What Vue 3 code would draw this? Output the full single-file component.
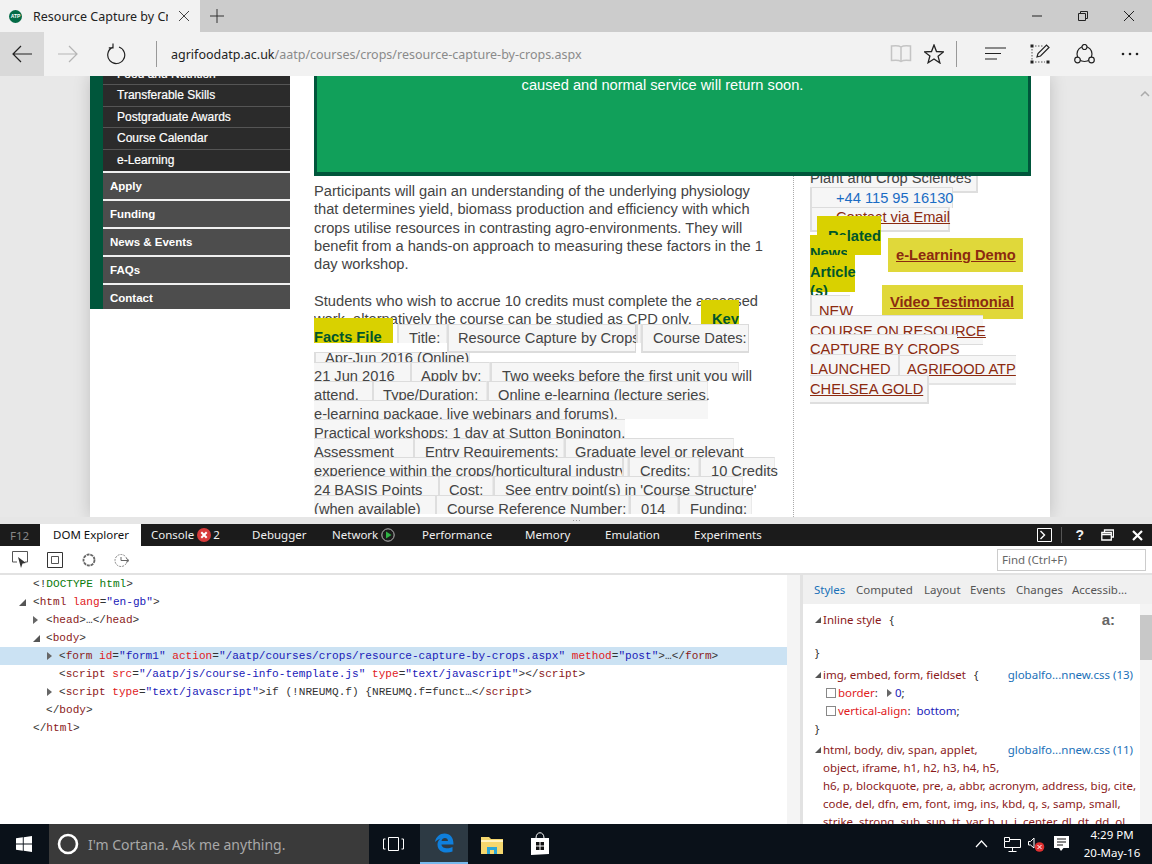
<template>
  <div class="screen">
    <!-- browser tab strip -->
    <div class="tabstrip">
      <div class="tab">
        <span class="favicon">ATP</span>
        <span class="tab-title">Resource Capture by Cr</span>
        <svg class="tab-x" width="12" height="12" viewBox="0 0 12 12"><path d="M1 1l10 10M11 1L1 11" stroke="#444" fill="none"/></svg>
      </div>
      <svg class="tab-plus" width="14" height="14" viewBox="0 0 14 14"><path d="M7 0v14M0 7h14" stroke="#333" fill="none"/></svg>
      <div class="win-btns">
        <svg width="12" height="12" viewBox="0 0 12 12"><path d="M1 6h10" stroke="#222" fill="none"/></svg>
        <svg width="12" height="12" viewBox="0 0 12 12"><path d="M3.5 3V1.500h7v7H8.500M1.500 3.500h7v7h-7z" stroke="#222" fill="none"/></svg>
        <svg width="12" height="12" viewBox="0 0 12 12"><path d="M1 1l10 10M11 1L1 11" stroke="#222" fill="none"/></svg>
      </div>
    </div>

    <!-- address bar -->
    <div class="toolbar">
      <div class="nav-btn back">
        <svg width="20" height="18" viewBox="0 0 20 18"><path d="M9 1L1 9l8 8M1 9h19" stroke="#222" fill="none" stroke-width="1.200"/></svg>
      </div>
      <div class="nav-btn">
        <svg width="20" height="18" viewBox="0 0 20 18"><path d="M11 1l8 8-8 8M19 9H0" stroke="#b5b5b5" fill="none" stroke-width="1.200"/></svg>
      </div>
      <div class="nav-btn refresh">
        <svg width="20" height="22" viewBox="0 0 20 22"><path d="M6.500 4.400a8.500 8.500 0 1 0 6.500-.4M7 .5v4.300H2.800" stroke="#222" fill="none" stroke-width="1.200"/></svg>
      </div>
      <div class="tool-sep"></div>
      <div class="url"><span class="url-host">agrifoodatp.ac.uk</span>/aatp/courses/crops/resource-capture-by-crops.aspx</div>
      <div class="tool-right">
        <svg class="ti-book" width="22" height="20" viewBox="0 0 22 20"><path d="M11 3C9 1.500 5 1.500 1.500 2v14.500c3.500-.5 7.500-.5 9.500 1 2-1.500 6-1.500 9.500-1V2C17 1.500 13 1.500 11 3zM11 3v14.500" stroke="#c4c4c4" stroke-width="1.500" fill="none"/></svg>
        <svg class="ti-star" width="20" height="20" viewBox="0 0 20 20"><path d="M10 1l2.500 6.500 7 .4-5.400 4.400 1.800 6.700L10 15l-5.900 3.700 1.800-6.700L.5 7.900l7-.4z" stroke="#222" stroke-width="1.300" fill="none"/></svg>
        <div class="tool-sep right"></div>
        <svg class="ti-hub" width="21" height="16" viewBox="0 0 21 16"><path d="M0 2h21M0 7.500h16M0 13h12" stroke="#222" stroke-width="1.200" fill="none"/></svg>
        <svg class="ti-note" width="20" height="20" viewBox="0 0 20 20"><path d="M2 5v11M5 18h10M5 2h8" stroke="#555" stroke-dasharray="1.500 1.500" fill="none"/><path d="M.5.500h3v3h-3zM.5 16.500h3v3h-3zM16.500 16.500h3v3h-3z" fill="#222"/><path d="M7 13l1-3.500L16.500 1 19 3.500 10.500 12z" stroke="#222" stroke-width="1.200" fill="none"/></svg>
        <svg class="ti-share" width="21" height="20" viewBox="0 0 21 20"><circle cx="10.500" cy="10" r="7.500" stroke="#222" stroke-width="1.200" fill="none"/><circle cx="10.500" cy="3" r="2.500" stroke="#222" stroke-width="1.200" fill="#f2f2f2"/><circle cx="3.500" cy="16" r="2.800" stroke="#222" stroke-width="1.200" fill="#f2f2f2"/><circle cx="17.500" cy="16" r="2.800" stroke="#222" stroke-width="1.200" fill="#f2f2f2"/></svg>
        <svg class="ti-dots" width="18" height="4" viewBox="0 0 18 4"><circle cx="2" cy="2" r="1.300" fill="#222"/><circle cx="9" cy="2" r="1.300" fill="#222"/><circle cx="16" cy="2" r="1.300" fill="#222"/></svg>
      </div>
    </div>

    <!-- web page -->
    <div class="viewport">
      <div class="page">
        <div class="sidebar">
          <ul class="subnav">
            <li v-for="item in subNav" :key="item">{{ item }}</li>
          </ul>
          <ul class="mainnav">
            <li v-for="item in mainNav" :key="item">{{ item }}</li>
          </ul>
        </div>
        <div class="content">
          <div class="notice">caused and normal service will return soon.</div>
          <div class="columns">
            <div class="main">
              <p class="para">Participants will gain an understanding of the underlying physiology that determines yield, biomass production and efficiency with which crops utilise resources in contrasting agro-environments. They will benefit from a hands-on approach to measuring these factors in the 1 day workshop.</p>
              <p class="para para-cut">Students who wish to accrue 10 credits must complete the assessed work, alternatively the course can be studied as CPD only.</p>
              <div class="key">Key</div>
              <div v-for="(row, r) in factRows" :key="r" class="fact-row" :class="row.cls">
                <div
                  v-for="cell in row.cells"
                  :key="cell.t"
                  class="cell"
                  :class="cell.cls"
                  :style="{ width: cell.w + 'px', paddingLeft: (cell.p || 0) + 'px', marginLeft: (cell.m || 0) + 'px' }"
                >{{ cell.t }}</div>
              </div>
            </div>
            <div class="aside">
              <div class="a-cell a-plant">Plant and Crop Sciences</div>
              <div class="a-cell a-phone"><a>+44 115 95 16130</a></div>
              <div class="a-cell a-mail"><a>Contact via Email</a></div>
              <div class="y-related">Related</div>
              <div class="y-news">News</div>
              <div class="y-article">Article<br>(s)</div>
              <a class="promo promo-demo">e-Learning Demo</a>
              <a class="promo promo-video">Video Testimonial</a>
              <div class="a-cell a-new"><a>NEW</a></div>
              <div class="a-cell a-course"><a>COURSE ON RESOURCE</a></div>
              <div class="a-cell a-capture"><a>CAPTURE BY CROPS</a></div>
              <div class="a-split">
                <div class="a-cell a-launched"><a>LAUNCHED</a></div>
                <div class="a-cell a-agrifood"><a>AGRIFOOD ATP</a></div>
              </div>
              <div class="a-cell a-chelsea"><a>CHELSEA GOLD</a></div>
            </div>
          </div>
        </div>
      </div>
      <div class="page-scroll">
        <svg width="10" height="6" viewBox="0 0 10 6"><path d="M1 5l4-4 4 4" stroke="#aaa" stroke-width="1.500" fill="none"/></svg>
      </div>
    </div>

    <div class="splitter"><span></span><span></span><span></span></div>

    <!-- F12 tools -->
    <div class="devbar">
      <div class="dev-f12">F12</div>
      <div
        v-for="tab in devTabs"
        :key="tab.name"
        class="dev-tab"
        :class="{ active: tab.active }"
        :style="{ width: tab.w + 'px' }"
      >
        {{ tab.name }}
        <span v-if="tab.name === 'Console'" class="err-badge"><svg width="14" height="14" viewBox="0 0 14 14"><circle cx="7" cy="7" r="7" fill="#d83b3b"/><path d="M4.300 4.300l5.400 5.400M9.700 4.300l-5.400 5.400" stroke="#fff" stroke-width="2"/></svg>2</span>
        <svg v-if="tab.name === 'Network'" class="net-icon" width="14" height="14" viewBox="0 0 14 14"><circle cx="7" cy="7" r="6.200" stroke="#bbb" fill="none"/><path d="M5 3.500L10.500 7 5 10.500z" fill="#2fb344"/></svg>
      </div>
      <div class="dev-right">
        <svg width="15" height="14" viewBox="0 0 15 14"><path d="M.5.500h14v13H.5z" stroke="#fff" fill="none"/><path d="M3.500 3l4 4-4 4" stroke="#fff" stroke-width="1.400" fill="none"/></svg>
        <div class="dev-sep"></div>
        <span class="dev-help">?</span>
        <svg class="dev-win" width="13" height="12" viewBox="0 0 13 12"><path d="M3.500 3V1h9v7h-2M.8 3.500h9.500V11H.8zM.8 5.500h9.500" stroke="#fff" fill="none" stroke-width="1.300"/></svg>
        <svg class="dev-x" width="11" height="11" viewBox="0 0 11 11"><path d="M1 1l9 9M10 1l-9 9" stroke="#fff" stroke-width="2.200" fill="none"/></svg>
      </div>
    </div>
    <div class="dev-tools">
      <svg class="dt-pick" width="17" height="18" viewBox="0 0 17 18"><path d="M5 11H.5V.5h15V11H13" stroke="#555" fill="none"/><path d="M6 6l8 6-3.500.5L9 17z" fill="#333"/></svg>
      <svg class="dt-box" width="16" height="16" viewBox="0 0 16 16"><path d="M.5.500h15v15H.5z" stroke="#333" fill="none"/><path d="M4.500 4.500h7v7h-7z" stroke="#555" fill="none"/></svg>
      <svg class="dt-ring" width="14" height="14" viewBox="0 0 14 14"><circle cx="7" cy="7" r="5.500" stroke="#666" stroke-width="1.800" stroke-dasharray="3 .8" fill="none"/></svg>
      <svg class="dt-clock" width="16" height="16" viewBox="0 0 16 16"><circle cx="7" cy="8.500" r="6" stroke="#888" stroke-dasharray="2 1" fill="none"/><path d="M7 5v3.500h7M12.500 6.500L15 8.500l-2.500 2" stroke="#666" fill="none"/></svg>
      <div class="find">Find (Ctrl+F)</div>
    </div>

    <div class="dev-panes">
      <div class="dom-pane">
        <div class="dom-tree">
          <div v-for="(line, i) in domLines" :key="i" class="dom-line" :class="{ sel: line.sel }" :style="{ paddingLeft: line.x + 'px' }">
            <i v-if="line.arrow" class="arrow" :class="line.arrow"></i>
            <span v-for="(part, k) in line.parts" :key="k" :class="part[0]">{{ part[1] }}</span>
          </div>
        </div>
        <div class="dom-scroll">
          <div class="dom-scroll-arrows">
            <svg width="6" height="10" viewBox="0 0 6 10"><path d="M5 0v10L0 5z" fill="#555"/></svg>
            <svg width="6" height="10" viewBox="0 0 6 10"><path d="M1 0v10l5-5z" fill="#555"/></svg>
          </div>
        </div>
      </div>
      <div class="side-pane">
        <div class="side-tabs">
          <span v-for="t in sideTabs" :key="t.name" :class="{ on: t.on }" :style="{ width: t.w + 'px' }">{{ t.name }}</span>
        </div>
        <div class="styles-body">
          <div class="styles">
            <div class="rule-head r1"><i class="arrow open small"></i><span class="sel-name">Inline style</span><span class="brace">{</span><b class="pseudo">a:</b></div>
            <div class="close c1">}</div>
            <div class="rule-head r2"><i class="arrow open small"></i><span class="sel-name">img, embed, form, fieldset</span><span class="brace">{</span><a class="src">globalfo...nnew.css (13)</a></div>
            <div class="decl"><i class="check"></i><span class="prop">border</span><span class="colon">:</span><i class="arrow shut tiny"></i><span class="val">0</span><span class="colon">;</span></div>
            <div class="decl"><i class="check"></i><span class="prop">vertical-align</span><span class="colon">:</span><span class="val gap">bottom</span><span class="colon">;</span></div>
            <div class="close c2">}</div>
            <div class="rule-head r3"><i class="arrow open small"></i><span class="sel-name">html, body, div, span, applet,</span><a class="src">globalfo...nnew.css (11)</a></div>
            <div class="sel-more">object, iframe, h1, h2, h3, h4, h5,</div>
            <div class="sel-more">h6, p, blockquote, pre, a, abbr, acronym, address, big, cite,</div>
            <div class="sel-more">code, del, dfn, em, font, img, ins, kbd, q, s, samp, small,</div>
            <div class="sel-more">strike, strong, sub, sup, tt, var, b, u, i, center, dl, dt, dd, ol,</div>
            <div class="sel-more">ul, li, fieldset, form, label, legend, caption, tbody, tfoot, thead</div>
          </div>
          <div class="styles-scroll"><div class="thumb"></div></div>
        </div>
      </div>
    </div>

    <!-- windows taskbar -->
    <div class="taskbar">
      <div class="start">
        <svg width="16" height="16" viewBox="0 0 16 16"><path d="M0 2.300l6.800-1v6.300H0zM7.700 1.200L16 0v7.600H7.700zM0 8.500h6.800v6.200l-6.800-1zM7.700 8.500H16V16l-8.300-1.200z" fill="#fff"/></svg>
      </div>
      <div class="cortana">
        <svg width="22" height="22" viewBox="0 0 22 22"><circle cx="11" cy="11" r="9" stroke="#fff" stroke-width="2.600" fill="none"/></svg>
        <span>I'm Cortana. Ask me anything.</span>
      </div>
      <div class="task-item taskview">
        <svg width="21" height="14" viewBox="0 0 21 14"><path d="M5.500.5h10v13h-10zM2.500 2H.5v10h2M18.500 2h2v10h-2" stroke="#fff" fill="none"/></svg>
      </div>
      <div class="task-item edge">
        <svg width="20" height="20" viewBox="0 0 20 20"><path d="M1 9C2 3.500 6 .5 10.500.5 16 .5 19.500 4 19.500 11.500H7.500c.3 4 6.500 5 11 2.500v4.500c-6 2.500-15 1-15-7 0-2.500 1-4.500 3-6C4.500 6.500 2.500 7.500 1 9zM7.500 8h6.500c0-4-6-4-6.500 0z" fill="#0f7fdc"/></svg>
      </div>
      <div class="task-item">
        <svg width="22" height="19" viewBox="0 0 22 19"><path d="M0 2h8l2 2h12v15H0z" fill="#f5d76e"/><path d="M0 5h22v2H0z" fill="#fff3c0"/><path d="M6 19v-7h10v7h-3v-4H9v4z" fill="#2aa7d8"/></svg>
      </div>
      <div class="task-item">
        <svg width="20" height="24" viewBox="0 0 20 24"><path d="M1 6h18v16l-18 1z" fill="#fff"/><path d="M6 6c0-7 8-7 8 0" stroke="#fff" fill="none"/><path d="M6 10h3.500v3.500H6zM10.500 10H14v3.500h-3.500zM6 14.500h3.500V18H6zM10.500 14.500H14V18h-3.500z" fill="#111"/></svg>
      </div>
      <div class="tray">
        <svg class="tr-up" width="13" height="8" viewBox="0 0 13 8"><path d="M1 7l5.500-6L12 7" stroke="#fff" stroke-width="1.200" fill="none"/></svg>
        <svg class="tr-net" width="17" height="15" viewBox="0 0 17 15"><path d="M.5.500h5v4h-5zM5.500 2.500h11v8h-16V4.500M8.500 10.500v4M4.500 14.500h8" stroke="#fff" fill="none"/></svg>
        <svg class="tr-vol" width="17" height="15" viewBox="0 0 17 15"><path d="M.5 4.500h2l3.500-3.500v10L2.500 8h-2z" stroke="#fff" fill="none"/><circle cx="11.500" cy="10" r="4.800" fill="#e03131"/><path d="M9.500 8l4 4M13.500 8l-4 4" stroke="#fff"/></svg>
        <svg class="tr-msg" width="15" height="16" viewBox="0 0 15 16"><path d="M0 0h15v12H9.500l-2.500 3-2-3H0z" fill="#fff"/><path d="M3 3h9M3 6h9M3 9h6" stroke="#111"/></svg>
        <div class="clock"><span>4:29 PM</span><span>20-May-16</span></div>
      </div>
    </div>
  </div>
</template>

<script setup>
const subNav = ['Food and Nutrition', 'Transferable Skills', 'Postgraduate Awards', 'Course Calendar', 'e-Learning']
const mainNav = ['Apply', 'Funding', 'News & Events', 'FAQs', 'Contact']

// the page's broken table: every box is clipped by the row below it
const factRows = [
  { cls: 'first', cells: [
    { t: 'Facts File', w: 79, cls: 'facts' },
    { t: 'Title:', w: 50, p: 10, m: 4, cls: 'box short' },
    { t: 'Resource Capture by Crops', w: 189, p: 9, cls: 'box tall' },
    { t: '', w: 5, cls: 'box short' },
    { t: 'Course Dates:', w: 108, p: 10, cls: 'box tall' }
  ] },
  { cls: 'second', cells: [
    { t: 'Apr-Jun 2016 (Online)', w: 156, p: 9, cls: 'box squat' }
  ] },
  { cells: [
    { t: '21 Jun 2016', w: 96 },
    { t: 'Apply by:', w: 80, p: 9, cls: 'box' },
    { t: 'Two weeks before the first unit you will', w: 249, p: 10, cls: 'box' }
  ] },
  { cells: [
    { t: 'attend.', w: 58 },
    { t: 'Type/Duration:', w: 115, p: 9, cls: 'box' },
    { t: 'Online e-learning (lecture series,', w: 221, p: 9, cls: 'box' }
  ] },
  { cells: [
    { t: 'e-learning package, live webinars and forums).', w: 394 }
  ] },
  { cells: [
    { t: 'Practical workshops: 1 day at Sutton Bonington.', w: 311 }
  ] },
  { cells: [
    { t: 'Assessment', w: 99 },
    { t: 'Entry Requirements:', w: 151, p: 10, cls: 'box' },
    { t: 'Graduate level or relevant', w: 170, p: 9, cls: 'box' }
  ] },
  { cells: [
    { t: 'experience within the crops/horticultural industry', w: 308 },
    { t: '', w: 6, cls: 'box' },
    { t: 'Credits:', w: 71, p: 10, cls: 'box' },
    { t: '10 Credits', w: 76, p: 10, cls: 'box' }
  ] },
  { cells: [
    { t: '24 BASIS Points', w: 124 },
    { t: 'Cost:', w: 55, p: 9, cls: 'box' },
    { t: "See entry point(s) in 'Course Structure'", w: 250, p: 10, cls: 'box' }
  ] },
  { cells: [
    { t: '(when available)', w: 121 },
    { t: 'Course Reference Number:', w: 194, p: 10, cls: 'box' },
    { t: '014', w: 49, p: 10, cls: 'box' },
    { t: 'Funding:', w: 74, p: 10, cls: 'box' }
  ] }
]

const devTabs = [
  { name: 'DOM Explorer', w: 101, active: true },
  { name: 'Console', w: 101 },
  { name: 'Debugger', w: 80 },
  { name: 'Network', w: 90 },
  { name: 'Performance', w: 103 },
  { name: 'Memory', w: 80 },
  { name: 'Emulation', w: 89 },
  { name: 'Experiments', w: 90 }
]

const sideTabs = [
  { name: 'Styles', w: 42, on: true },
  { name: 'Computed', w: 68 },
  { name: 'Layout', w: 46 },
  { name: 'Events', w: 46 },
  { name: 'Changes', w: 56 },
  { name: 'Accessib...', w: 70 }
]

const domLines = [
  { x: 33, parts: [['tx', '<!'], ['doc', 'DOCTYPE html'], ['tx', '>']] },
  { x: 33, arrow: 'open at-19', parts: [['tx', '<'], ['tag', 'html'], ['tx', ' '], ['attr', 'lang'], ['tx', '='], ['str', '"en-gb"'], ['tx', '>']] },
  { x: 46, arrow: 'shut at-33', parts: [['tx', '<'], ['tag', 'head'], ['tx', '>…</'], ['tag', 'head'], ['tx', '>']] },
  { x: 46, arrow: 'open at-33', parts: [['tx', '<'], ['tag', 'body'], ['tx', '>']] },
  { x: 59, sel: true, arrow: 'shut at-46', parts: [['tx', '<'], ['tag', 'form'], ['tx', ' '], ['attr', 'id'], ['tx', '='], ['str', '"form1"'], ['tx', ' '], ['attr', 'action'], ['tx', '='], ['str', '"/aatp/courses/crops/resource-capture-by-crops.aspx"'], ['tx', ' '], ['attr', 'method'], ['tx', '='], ['str', '"post"'], ['tx', '>…</'], ['tag', 'form'], ['tx', '>']] },
  { x: 59, parts: [['tx', '<'], ['tag', 'script'], ['tx', ' '], ['attr', 'src'], ['tx', '='], ['str', '"/aatp/js/course-info-template.js"'], ['tx', ' '], ['attr', 'type'], ['tx', '='], ['str', '"text/javascript"'], ['tx', '></'], ['tag', 'script'], ['tx', '>']] },
  { x: 59, arrow: 'shut at-46', parts: [['tx', '<'], ['tag', 'script'], ['tx', ' '], ['attr', 'type'], ['tx', '='], ['str', '"text/javascript"'], ['tx', '>if (!NREUMQ.f) {NREUMQ.f=funct…</'], ['tag', 'script'], ['tx', '>']] },
  { x: 46, parts: [['tx', '</'], ['tag', 'body'], ['tx', '>']] },
  { x: 33, parts: [['tx', '</'], ['tag', 'html'], ['tx', '>']] }
]
</script>

<style>
html, body { margin: 0; padding: 0; overflow: hidden; }
</style>

<style scoped>
.screen {
  width: 1152px;
  height: 864px;
  display: flex;
  flex-direction: column;
  overflow: hidden;
  font-family: "Noto Sans", sans-serif;
  background: #fff;
}

/* tab strip */
.tabstrip {
  height: 32px;
  flex: none;
  display: flex;
  align-items: center;
  background: #ccc;
}
.tab {
  width: 200px;
  height: 32px;
  background: #f2f2f2;
  display: flex;
  align-items: center;
  flex: none;
}
.favicon {
  width: 13px;
  height: 13px;
  margin-left: 9px;
  border-radius: 50%;
  background: #046b46;
  color: #fff;
  font: bold 5px/13px "Liberation Sans", sans-serif;
  text-align: center;
}
.tab-title {
  margin-left: 11px;
  width: 135px;
  font-size: 12.5px;
  color: #222;
  white-space: nowrap;
  overflow: hidden;
}
.tab-x { margin-left: 10px; }
.tab-plus { margin-left: 10px; }
.win-btns {
  margin-left: auto;
  display: flex;
  gap: 34px;
  padding-right: 17px;
}

/* address bar */
.toolbar {
  height: 44px;
  flex: none;
  display: flex;
  align-items: center;
  background: #f2f2f2;
}
.nav-btn {
  width: 48px;
  height: 44px;
  display: flex;
  align-items: center;
  justify-content: center;
}
.nav-btn.back { width: 44px; background: #d9d9d9; }
.nav-btn.refresh { width: 48px; }
.tool-sep {
  width: 1px;
  height: 26px;
  background: #999;
  margin-left: 16px;
}
.url {
  margin-left: 14px;
  font-size: 12.5px;
  color: #8a8a8a;
  white-space: nowrap;
}
.url-host { color: #222; }
.tool-right {
  margin-left: auto;
  display: flex;
  align-items: center;
}
.ti-star { margin-left: 12px; }
.tool-sep.right { margin-left: 12px; }
.ti-hub { margin-left: 28px; }
.ti-note { margin-left: 24px; }
.ti-share { margin-left: 24px; }
.ti-dots { margin-left: 26px; margin-right: 13px; }

/* page */
.viewport {
  height: 441px;
  flex: none;
  display: flex;
  overflow: hidden;
  background: #e8e8e8;
  position: relative;
}
.page {
  margin-left: 90px;
  width: 960px;
  height: 441px;
  flex: none;
  display: flex;
  background: #fff;
  box-shadow: 0 0 16px rgba(0, 0, 0, 0.18);
  font-family: "Liberation Sans", sans-serif;
}
.page-scroll {
  position: absolute;
  right: 2px;
  top: 4px;
}
.sidebar {
  width: 200px;
  flex: none;
  height: 245px;
  margin-top: -12px;
  padding-left: 13px;
  box-sizing: border-box;
  background: #00563b;
  color: #fff;
  font-size: 12px;
  overflow: hidden;
}
.subnav, .mainnav {
  list-style: none;
  margin: 0;
  padding: 0;
}
.subnav li {
  height: 21.4px;
  box-sizing: border-box;
  line-height: 20px;
  padding-left: 14px;
  background: #2b2b2b;
  border-bottom: 1px solid #555;
  -webkit-text-stroke: 0.2px #fff;
}
.subnav li:last-child { border-bottom: 0; }
.mainnav li {
  height: 28px;
  box-sizing: border-box;
  line-height: 26px;
  padding-left: 7px;
  background: #4d4d4d;
  border-top: 2px solid #f0f0f0;
  font-weight: bold;
  font-size: 11.5px;
}
.content {
  margin-left: 24px;
  width: 717px;
  flex: none;
  display: flex;
  flex-direction: column;
}
.notice {
  height: 100px;
  flex: none;
  box-sizing: border-box;
  background: #11a05a;
  border: solid #00563b;
  border-width: 0 3px 4px;
  padding: 0 20px 0 0;
  color: #fff;
  font-size: 14.67px;
  line-height: 18px;
  text-align: center;
  position: relative;
  z-index: 3;
}
.columns { display: flex; flex: 1; min-height: 0; }
.main {
  width: 479px;
  flex: none;
  padding-top: 6px;
  position: relative;
  color: #444;
  font-size: 14.67px;
  line-height: 18.33px;
}
.para {
  margin: 0 30px 18.33px 0;
}
.para-cut {
  height: 32px;
  overflow: hidden;
  margin-bottom: 0;
}
.key {
  position: absolute;
  left: 387px;
  top: 124px;
  width: 38px;
  height: 24px;
  box-sizing: border-box;
  padding: 10px 0 0 11px;
  background: #d9d100;
  color: #00562b;
  font-weight: bold;
  line-height: 18px;
}
.fact-row {
  display: flex;
  height: 19px;
  overflow: hidden;
  white-space: nowrap;
  position: relative;
}
.fact-row.first { overflow: visible; z-index: 1; }
.fact-row.second { z-index: 0; }
.cell {
  flex: none;
  box-sizing: border-box;
  height: 29px;
  padding-top: 4px;
  background: #f6f6f6;
  border-top: 1px solid #dcdcdc;
}
.cell.box { border-left: 2px solid #dedede; border-right: 1px solid #eaeaea; }
.cell.short { height: 19px; }
.cell.tall { height: 29px; border-right: 1px solid #d8d8d8; border-bottom: 2px solid #dcdcdc; }
.cell.squat { margin-top: 9px; height: 10px; padding-top: 0; line-height: 10px; }
.cell.facts {
  height: 25px;
  margin-top: -6px;
  padding-top: 10px;
  background: #d9d100;
  border: 0;
  color: #00562b;
  font-weight: bold;
}

.aside {
  flex: 1;
  min-width: 0;
  position: relative;
  border-left: 1px dotted #aaa;
  padding-left: 16px;
  color: #444;
  font-size: 14.67px;
  line-height: 18.33px;
  white-space: nowrap;
}
.aside a { color: #8b2a10; text-decoration: underline; }
.a-cell {
  position: relative;
  box-sizing: border-box;
  background: #f6f6f6;
  border-top: 1px solid #dcdcdc;
}
.a-plant {
  width: 168px;
  height: 17px;
  line-height: 4px;
  overflow: hidden;
  border-top: 0;
  border-right: 2px solid #dedede;
  border-bottom: 2px solid #dedede;
}
.a-phone {
  margin-top: -6px;
  width: 143px;
  height: 21px;
  padding-left: 24px;
  line-height: 20px;
  border-left: 2px solid #dedede;
  border-right: 1px solid #dedede;
}
.a-phone a { color: #1a6cc4; text-decoration: none; }
.a-mail {
  margin-top: -1px;
  width: 140px;
  height: 25px;
  padding-left: 24px;
  line-height: 19px;
  border-left: 2px solid #dedede;
  border-right: 2px solid #dedede;
  border-bottom: 2px solid #dedede;
}
.y-related, .y-news, .y-article {
  position: absolute;
  background: #d9d100;
  color: #00562b;
  font-weight: bold;
  z-index: 1;
}
.y-related {
  left: 23px;
  top: 40px;
  width: 64px;
  height: 39px;
  box-sizing: border-box;
  padding: 11px 0 0 11px;
}
.y-news {
  left: 16px;
  top: 59px;
  width: 37px;
  height: 20px;
  overflow: hidden;
  padding-top: 9px;
  box-sizing: border-box;
  z-index: 2;
}
.y-article {
  left: 16px;
  top: 79px;
  width: 45px;
  height: 37px;
  box-sizing: border-box;
  padding-top: 8px;
  line-height: 19px;
  z-index: 3;
}
.promo {
  position: absolute;
  box-sizing: border-box;
  height: 34px;
  left: 88px;
  background: #e0d83a;
  font-weight: bold;
  line-height: 35px;
}
.promo-demo { left: 94px; top: 62px; width: 135px; padding-left: 8px; }
.promo-video { top: 109px; width: 141px; padding-left: 8px; }
.a-new {
  margin-top: 63px;
  width: 40px;
  height: 22px;
  padding: 6px 0 0 7px;
  border-left: 2px solid #dedede;
  z-index: 4;
}
.a-course {
  width: 173px;
  height: 30px;
  margin-top: -2px;
  padding-top: 6px;
  z-index: 4;
  border-bottom: 1px solid #dcdcdc;
}
.a-capture {
  width: 147px;
  height: 30px;
  margin-top: -11px;
  padding-top: 5px;
  z-index: 4;
}
.a-split { display: flex; margin-top: -10px; position: relative; z-index: 4; }
.a-launched { width: 90px; height: 30px; padding-top: 5px; border-right: 2px solid #dedede; }
.a-agrifood {
  width: 116px;
  height: 30px;
  padding: 4px 0 0 7px;
  margin-top: 1px;
  border-bottom: 2px solid #e4e4e4;
}
.a-chelsea {
  width: 119px;
  height: 29px;
  margin-top: -10px;
  padding-top: 4px;
  z-index: 5;
  border-right: 2px solid #dedede;
  border-bottom: 2px solid #dedede;
}

/* f12 */
.splitter {
  height: 7px;
  flex: none;
  display: flex;
  justify-content: center;
  align-items: center;
  gap: 2px;
  background: #e6e6e6;
}
.splitter span { width: 1px; height: 1px; background: #999; }
.devbar {
  height: 22px;
  flex: none;
  display: flex;
  align-items: center;
  background: #1b1b1b;
  color: #f0f0f0;
  font-size: 11.5px;
  padding-left: 10px;
  position: relative;
}
.dev-f12 { width: 30px; color: #888; }
.dev-tab {
  height: 22px;
  line-height: 22px;
  flex: none;
  box-sizing: border-box;
  padding-left: 10px;
  white-space: nowrap;
  display: flex;
  align-items: center;
}
.dev-tab.active { background: #fff; color: #111; padding-left: 13px; }
.err-badge { display: inline-flex; align-items: center; gap: 2px; margin-left: 3px; }
.net-icon { margin-left: 3px; }
.dev-right {
  margin-left: auto;
  display: flex;
  align-items: center;
  padding-right: 9px;
}
.dev-sep { width: 1px; height: 16px; background: #555; margin-left: 9px; }
.dev-help { margin-left: 13px; font: bold 14px "Liberation Sans", sans-serif; }
.dev-win { margin-left: 17px; }
.dev-x { margin-left: 18px; }
.dev-tools {
  height: 29px;
  flex: none;
  display: flex;
  align-items: center;
  padding-left: 12px;
  box-sizing: border-box;
  border-bottom: 2px solid #e2e2e2;
}
.dt-box { margin-left: 18px; }
.dt-ring { margin-left: 19px; }
.dt-clock { margin-left: 18px; }
.find {
  margin-left: auto;
  margin-right: 6px;
  width: 149px;
  height: 22px;
  box-sizing: border-box;
  border: 1px solid #ccc;
  padding-left: 4px;
  color: #666;
  font-size: 11.5px;
  line-height: 20px;
}
.dev-panes {
  height: 249px;
  flex: none;
  display: flex;
  overflow: hidden;
}
.dom-pane {
  width: 800px;
  flex: none;
  display: flex;
}
.dom-tree {
  flex: 1;
  padding-top: 0;
  font-family: "Liberation Mono", monospace;
  font-size: 11.1px;
  color: #333;
}
.dom-line {
  height: 18px;
  line-height: 18px;
  position: relative;
  white-space: pre;
  box-sizing: border-box;
}
.dom-line.sel { background: #cbe2f3; }
.tag { color: #8b1a1a; }
.attr { color: #e0201c; }
.str { color: #1a1ab8; }
.doc { color: #0a7a0a; }
.arrow {
  position: absolute;
  display: block;
  width: 0;
  height: 0;
}
.arrow.open {
  border-style: solid;
  border-width: 0 0 7px 7px;
  border-color: transparent transparent #555 transparent;
  top: 6px;
}
.arrow.shut {
  border-style: solid;
  border-width: 4px 0 4px 5px;
  border-color: transparent transparent transparent #666;
  top: 5px;
}
.at-19 { left: 19px; }
.at-33 { left: 33px; }
.at-46 { left: 47px; }
.dom-scroll {
  width: 13px;
  background: #f4f4f4;
  display: flex;
  align-items: flex-end;
}
.dom-scroll-arrows { display: none; }
.side-pane {
  flex: 1;
  min-width: 0;
  border-left: 3px solid #e2e2e2;
  display: flex;
  flex-direction: column;
}
.side-tabs {
  height: 29px;
  flex: none;
  display: flex;
  align-items: center;
  background: #f0f0f0;
  padding-left: 11px;
  font-size: 11.5px;
  color: #555;
  white-space: nowrap;
}
.side-tabs .on { color: #1a70b8; }
.styles-body { flex: 1; display: flex; min-height: 0; }
.styles {
  flex: 1;
  min-width: 0;
  padding: 7px 0 0 12px;
  font-size: 11.5px;
  line-height: 18px;
  color: #333;
  white-space: nowrap;
  overflow: hidden;
}
.rule-head { position: relative; padding-left: 8px; }
.arrow.small { left: 0; top: 6px; border-width: 0 0 6px 6px; }
.arrow.tiny { position: static; display: inline-block; margin: 0 3px 0 9px; }
.r2 { margin-top: 4px; }
.r3 { margin-top: 3px; }
.c1 { margin-top: 15px; }
.sel-name, .sel-more { color: #8b1a1a; }
.sel-more { padding-left: 8px; }
.brace { margin-left: 8px; }
.pseudo {
  position: absolute;
  right: 25px;
  top: 0;
  font: bold 15px/18px "Liberation Sans", sans-serif;
  color: #666;
}
.src { position: absolute; right: 7px; top: 0; color: #1a70b8; }
.decl { display: flex; align-items: center; padding-left: 11px; height: 18px; }
.check {
  width: 10px;
  height: 10px;
  border: 1px solid #888;
  margin-right: 2px;
  box-sizing: border-box;
  flex: none;
}
.prop { color: #e0201c; }
.val { color: #1a1ab8; }
.val.gap { margin-left: 6px; }
.styles-scroll { width: 12px; background: #f4f4f4; flex: none; padding-top: 11px; }
.thumb { height: 45px; background: #c8c8c8; }

/* taskbar */
.taskbar {
  height: 40px;
  flex: none;
  display: flex;
  align-items: center;
  background: #0a1119;
  color: #fff;
}
.start {
  width: 49px;
  display: flex;
  justify-content: center;
  padding-right: 2px;
  box-sizing: border-box;
}
.cortana {
  width: 320px;
  height: 40px;
  display: flex;
  align-items: center;
  gap: 9px;
  padding-left: 8px;
  box-sizing: border-box;
  background: #3a3a3a;
  color: #a8a8a8;
  font-size: 14px;
}
.task-item {
  width: 48px;
  height: 40px;
  display: flex;
  align-items: center;
  justify-content: center;
  box-sizing: border-box;
}
.taskview { margin-left: 0; }
.edge { background: #2d3a44; border-bottom: 2px solid #76b9ed; margin-left: 3px; }
.tray {
  margin-left: auto;
  display: flex;
  align-items: center;
}
.tr-net { margin-left: 16px; }
.tr-vol { margin-left: 7px; }
.tr-msg { margin-left: 9px; }
.clock {
  width: 80px;
  margin-left: 3px;
  display: flex;
  flex-direction: column;
  align-items: center;
  font-size: 11.5px;
  line-height: 18px;
}
</style>
